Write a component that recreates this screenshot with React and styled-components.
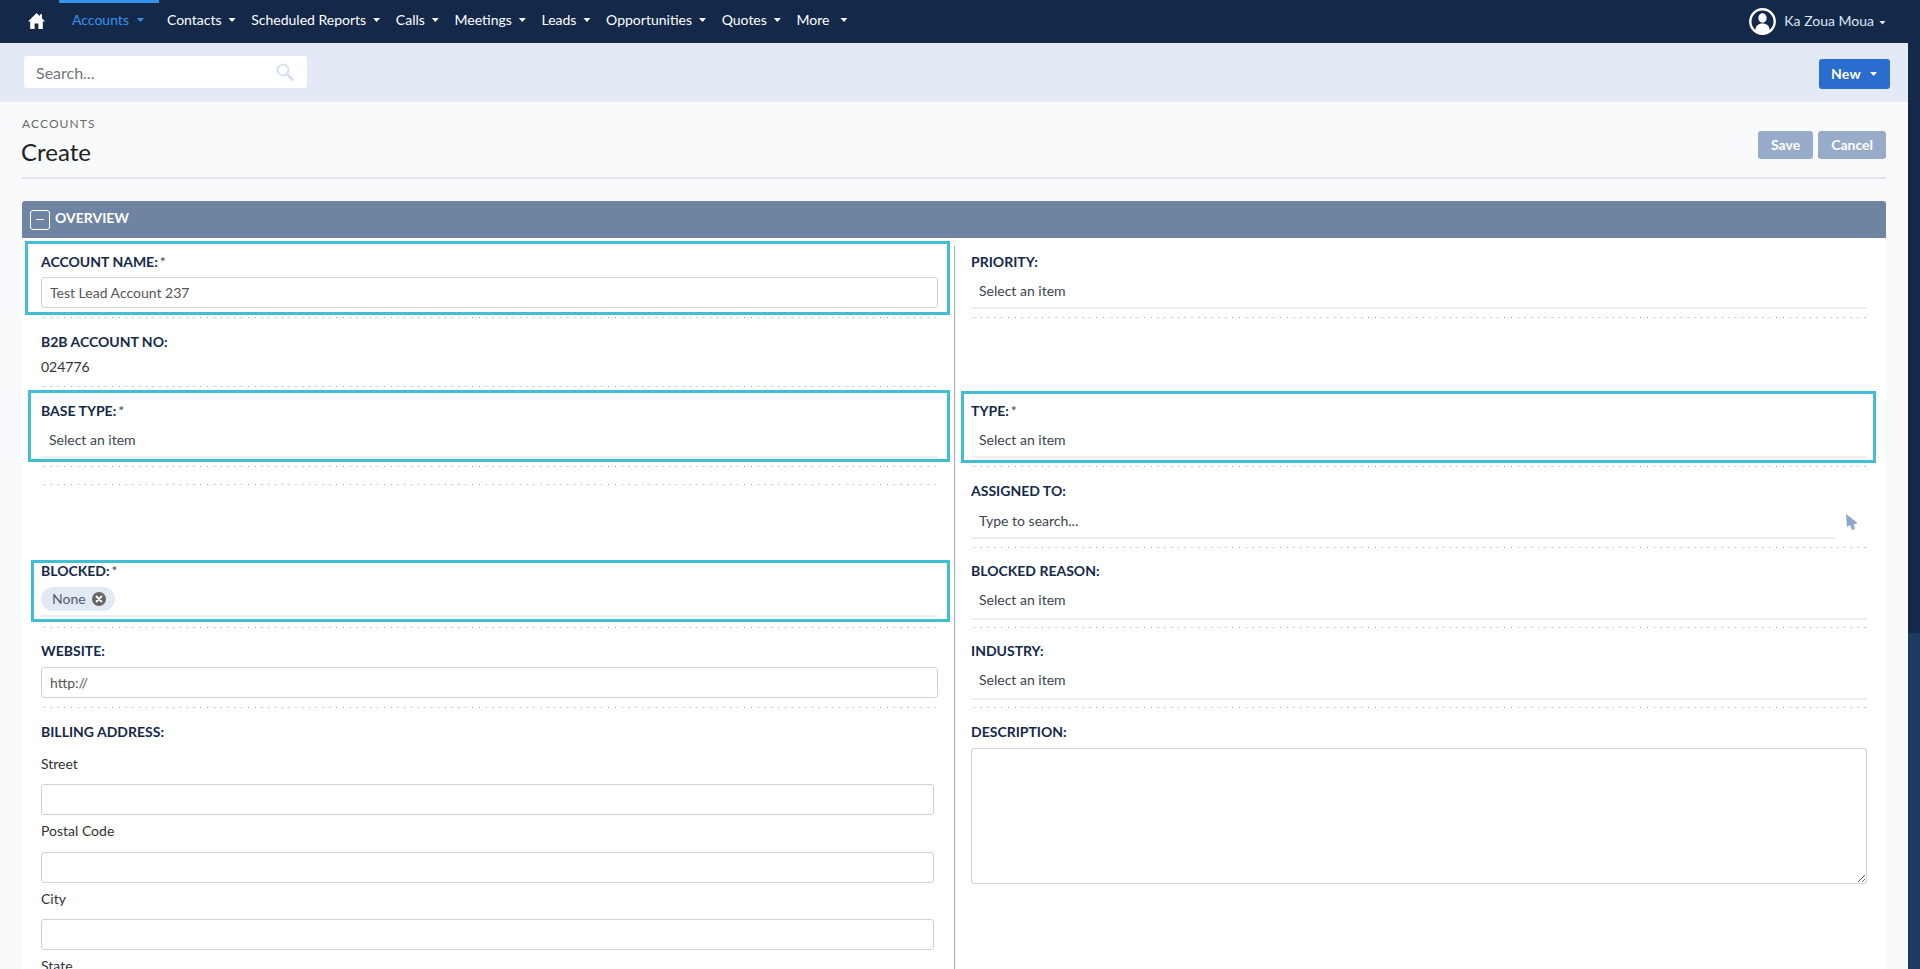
import React from "react";
import styled, { createGlobalStyle } from "styled-components";

const Navy = "#14294a";
const NavyTrack = "#1e3a5f";
const LabelColor = "#14294a";
const TextColor = "#3b4452";
const Teal = "#42bed4";

const GlobalStyle = createGlobalStyle`
  body {
    margin: 0;
    overflow: hidden;
    font-family: "Lato", "Liberation Sans", sans-serif;
    font-size: 14px;
    color: ${TextColor};
  }
  * {
    box-sizing: border-box;
  }
`;

const Shell = styled.div`
  height: 100vh;
  display: flex;
  overflow: hidden;
`;

const Page = styled.div`
  flex: 1;
  min-width: 0;
  display: flex;
  flex-direction: column;
  overflow: hidden;
  background: #f8fafc;
`;

const ScrollRail = styled.div`
  width: 12px;
  flex: none;
  background: ${NavyTrack};
`;

const ScrollThumb = styled.div`
  height: 633px;
  background: ${Navy};
`;

const NavBar = styled.nav`
  height: 43px;
  flex: none;
  display: flex;
  align-items: stretch;
  padding: 0 22px 0 28px;
  background: ${Navy};
`;

const HomeLink = styled.a`
  width: 31px;
  display: flex;
  align-items: center;
  padding-bottom: 2px;
  color: #fff;
`;

const NavList = styled.div`
  display: flex;
  align-items: stretch;
`;

const NavItem = styled.a`
  display: flex;
  align-items: center;
  padding: ${(p) => (p.$active ? "0 15px 5px 13px" : "0 15.7px 5px 0")};
  margin-right: ${(p) => (p.$active ? "8px" : "0")};
  border-top: 3px solid ${(p) => (p.$active ? "#3393ee" : "transparent")};
  border-bottom: 3px solid transparent;
  color: ${(p) => (p.$active ? "#3393ee" : "#fff")};
  white-space: nowrap;
`;

const Caret = styled.span`
  display: inline-block;
  width: 7px;
  height: 4px;
  margin: 2px 0 0 ${(p) => p.$gap || 7}px;
  background: currentColor;
  clip-path: polygon(0 0, 100% 0, 50% 100%);
`;

const UserMenu = styled.div`
  margin-left: auto;
  display: flex;
  align-items: center;
  color: #dbe8f6;
`;

const UserName = styled.span`
  margin: 0 0 2px 8px;
`;

const ActionBar = styled.div`
  height: 59px;
  flex: none;
  display: flex;
  justify-content: space-between;
  align-items: flex-start;
  padding: 13px 18px 0 24px;
  background: #e3e9f5;
`;

const SearchBox = styled.div`
  width: 283px;
  height: 32px;
  display: flex;
  align-items: center;
  justify-content: space-between;
  padding: 0 13px 0 12px;
  background: #fff;
  border-radius: 3px;
  color: #d6e0ee;
`;

const SearchInput = styled.input`
  width: 200px;
  border: 0;
  outline: 0;
  padding: 0;
  background: transparent;
  font: 16px "Lato", sans-serif;
  &::placeholder {
    color: #6f7680;
    opacity: 1;
  }
`;

const NewButton = styled.button`
  width: 71px;
  height: 30px;
  margin-top: 3px;
  display: flex;
  align-items: center;
  padding: 0 0 2px 12px;
  border: 0;
  border-radius: 3px;
  background: #2b6dcf;
  color: #fff;
  font: bold 14px "Lato", sans-serif;
  letter-spacing: 0.3px;
`;

const Heading = styled.header`
  height: 77px;
  flex: none;
  margin: 0 22px 22px;
  display: flex;
  justify-content: space-between;
  align-items: flex-start;
  border-bottom: 2px solid #e3e5e8;
`;

const Breadcrumb = styled.div`
  margin-top: 15px;
  font-size: 12px;
  line-height: 14px;
  letter-spacing: 1.1px;
  color: #6b6b6b;
`;

const Title = styled.h1`
  margin: 6px 0 0 -1px;
  font-size: 24px;
  line-height: 30px;
  font-weight: 400;
  color: #222;
`;

const HeadingActions = styled.div`
  display: flex;
  gap: 5px;
  margin-top: 29px;
`;

const GhostButton = styled.button`
  height: 28px;
  padding: 0 13px 2px;
  border: 0;
  border-radius: 3px;
  background: #98abcb;
  color: #fff;
  font: bold 14px "Lato", sans-serif;
`;

const Panel = styled.section`
  flex: 1;
  margin: 0 22px;
  display: flex;
  flex-direction: column;
  background: #fff;
`;

const PanelHeader = styled.div`
  height: 37px;
  flex: none;
  display: flex;
  align-items: center;
  gap: 5px;
  padding: 0 8px 5px;
  background: #6f84a2;
  border-radius: 3px 3px 0 0;
  color: #fff;
  font-weight: 700;
`;

const ToggleBox = styled.span`
  width: 20px;
  height: 20px;
  margin-top: 5px;
  display: flex;
  align-items: center;
  justify-content: center;
  border: 1px solid #fff;
  border-radius: 3px;
  &::before {
    content: "";
    width: 8px;
    height: 1px;
    background: #fff;
  }
`;

const FormGrid = styled.div`
  margin-top: 8px;
  display: grid;
  grid-template-columns: 1fr 1fr;
  grid-template-rows: 72px 69px 80px 81px 80px 80px auto;
`;

const Cell = styled.div`
  position: relative;
  padding: ${(p) => (p.$right ? "0 19px 0 16px" : "0 16px 0 19px")};
  border-left: ${(p) => (p.$right ? "1px solid #a3afcc" : "0")};
`;

const Field = styled.div`
  height: ${(p) => p.$height || "100%"};
  padding-top: ${(p) => p.$top ?? 14}px;
  background-image: ${(p) =>
    p.$plain
      ? "none"
      : "linear-gradient(to right, #999 1px, transparent 1px)"};
  background-size: 6.8px 1px;
  background-position: 3px bottom;
  background-repeat: repeat-x;
`;

const Label = styled.div`
  font-size: 14px;
  line-height: 20px;
  font-weight: 700;
  color: ${LabelColor};
  text-transform: uppercase;
`;

const Required = styled.span`
  margin-left: 2px;
  font-weight: 400;
  color: #3c4a60;
`;

const Value = styled.div`
  margin-top: 5px;
  line-height: 20px;
  color: #333;
`;

const TextInput = styled.input`
  display: block;
  width: ${(p) => (p.$narrow ? "calc(100% - 4px)" : "100%")};
  height: 31px;
  margin-top: ${(p) => p.$top ?? 5}px;
  padding: 0 8px 1px;
  background: #fff;
  border: 1px solid #cdd1d8;
  border-radius: 3px;
  outline: 0;
  color: #555;
  font: 14px "Lato", sans-serif;
`;

const SelectBox = styled.div`
  flex: 1;
  height: ${(p) => p.$height ?? 28}px;
  margin-top: ${(p) => p.$top ?? 9}px;
  padding-left: 8px;
  line-height: 20px;
  border-bottom: 2px solid #efefef;
  color: #3b4452;
`;

const SearchRow = styled.div`
  display: flex;
  align-items: flex-start;
`;

const LookupIcon = styled.svg`
  flex: none;
  margin: 13px 10px 0;
  color: #8fa6cc;
`;

const ChipRow = styled.div`
  height: 30px;
  margin-top: 6px;
  border-bottom: 2px solid #efefef;
`;

const Chip = styled.span`
  height: 24px;
  display: inline-flex;
  align-items: center;
  gap: 6px;
  padding: 0 9px 1px 11px;
  border-radius: 12px;
  background: #e3e9f5;
  color: #505c6e;
`;

const AddressLabel = styled.div`
  margin-top: ${(p) => p.$top ?? 6}px;
  line-height: 20px;
  color: #333;
`;

const Description = styled.textarea`
  display: block;
  width: 100%;
  height: 136px;
  margin-top: 6px;
  padding: 8px;
  border: 1px solid #cdd1d8;
  border-radius: 3px;
  outline: 0;
  resize: both;
  font: 14px "Lato", sans-serif;
`;

const Callout = styled.div`
  position: absolute;
  inset: ${(p) => p.$inset};
  border: 3px solid ${Teal};
  pointer-events: none;
`;

const HomeIcon = () => (
  <svg width="17" height="16" viewBox="0 0 17 16" fill="currentColor">
    <path d="M8.5 0 L11.8 3.2 V1.2 H14 V5.3 L17 8.4 H14.8 V16 H10.4 V10.5 H6.6 V16 H2.2 V8.4 H0 Z" />
  </svg>
);

const UserIcon = () => (
  <svg width="27" height="27" viewBox="0 0 27 27" fill="#fff">
    <circle cx="13.5" cy="13.5" r="12.2" fill="none" stroke="#fff" strokeWidth="2.4" />
    <ellipse cx="13.5" cy="10" rx="4.2" ry="4.7" />
    <path d="M6.3 23 C6.3 17.5 9.5 15.5 13.5 15.5 C17.5 15.5 20.7 17.5 20.7 23 C16.5 25.6 10.5 25.6 6.3 23 Z" />
  </svg>
);

const SearchIcon = () => (
  <svg width="18" height="18" viewBox="0 0 18 18" fill="none" stroke="currentColor">
    <circle cx="7" cy="7" r="5.5" strokeWidth="2" />
    <path d="M11 11 L16.5 16.5" strokeWidth="3" strokeLinecap="round" />
  </svg>
);

const ChipClose = () => (
  <svg width="14" height="14" viewBox="0 0 14 14">
    <circle cx="7" cy="7" r="7" fill="#666" />
    <path d="M4.5 4.5 L9.5 9.5 M9.5 4.5 L4.5 9.5" stroke="#fff" strokeWidth="1.8" strokeLinecap="round" />
  </svg>
);

const navLinks = [
  { name: "Contacts" },
  { name: "Scheduled Reports" },
  { name: "Calls" },
  { name: "Meetings" },
  { name: "Leads" },
  { name: "Opportunities" },
  { name: "Quotes" },
  { name: "More", gap: 11 }
];

const Select = ({ label, required, top = 14, boxHeight }) => (
  <Field $top={top}>
    <Label>
      {label}:{required && <Required>*</Required>}
    </Label>
    <SelectBox $height={boxHeight}>Select an item</SelectBox>
  </Field>
);

const App = () => {
  return (
    <Shell>
      <GlobalStyle />
      <Page>
        <NavBar>
          <HomeLink>
            <HomeIcon />
          </HomeLink>
          <NavList>
            <NavItem $active>
              Accounts
              <Caret $gap={8} />
            </NavItem>
            {navLinks.map((link) => (
              <NavItem key={link.name}>
                {link.name}
                <Caret $gap={link.gap} />
              </NavItem>
            ))}
          </NavList>
          <UserMenu>
            <UserIcon />
            <UserName>Ka Zoua Moua</UserName>
            <Caret $gap={5} />
          </UserMenu>
        </NavBar>

        <ActionBar>
          <SearchBox>
            <SearchInput placeholder="Search..." />
            <SearchIcon />
          </SearchBox>
          <NewButton>
            New
            <Caret $gap={9} />
          </NewButton>
        </ActionBar>

        <Heading>
          <div>
            <Breadcrumb>ACCOUNTS</Breadcrumb>
            <Title>Create</Title>
          </div>
          <HeadingActions>
            <GhostButton>Save</GhostButton>
            <GhostButton>Cancel</GhostButton>
          </HeadingActions>
        </Heading>

        <Panel>
          <PanelHeader>
            <ToggleBox />
            OVERVIEW
          </PanelHeader>
          <FormGrid>
            <Cell>
              <Callout $inset="-5px 4px 3px 3px" />
              <Field $top={6}>
                <Label>
                  Account Name:<Required>*</Required>
                </Label>
                <TextInput defaultValue="Test Lead Account 237" />
              </Field>
            </Cell>
            <Cell $right>
              <Select label="Priority" top={6} />
            </Cell>

            <Cell>
              <Field>
                <Label>B2B Account No:</Label>
                <Value>024776</Value>
              </Field>
            </Cell>
            <Cell $right />

            <Cell>
              <Callout $inset="3px 4px 5px 6px" />
              <Select label="Base Type" required />
            </Cell>
            <Cell $right>
              <Callout $inset="4px 10px 4px 6px" />
              <Select label="Type" required />
            </Cell>

            <Cell>
              <Field $height="18px" />
            </Cell>
            <Cell $right>
              <Field>
                <Label>Assigned To:</Label>
                <SearchRow>
                  <SelectBox $top={10}>Type to search...</SelectBox>
                  <LookupIcon width="11" height="16" viewBox="0 0 11 16" fill="currentColor">
                    <path d="M0 0 L11 8.5 L11 9.5 L7.5 10 L9 15 L6 16 L4 11 L1 13 Z" />
                  </LookupIcon>
                </SearchRow>
              </Field>
            </Cell>

            <Cell>
              <Callout $inset="12px 4px 6px 9px" />
              <Field $top={13}>
                <Label>
                  Blocked:<Required>*</Required>
                </Label>
                <ChipRow>
                  <Chip>
                    None
                    <ChipClose />
                  </Chip>
                </ChipRow>
              </Field>
            </Cell>
            <Cell $right>
              <Select label="Blocked Reason" top={13} boxHeight={30} />
            </Cell>

            <Cell>
              <Field $top={13}>
                <Label>Website:</Label>
                <TextInput $top={6} defaultValue="http://" />
              </Field>
            </Cell>
            <Cell $right>
              <Select label="Industry" top={13} boxHeight={30} />
            </Cell>

            <Cell>
              <Field $plain>
                <Label>Billing Address:</Label>
                <AddressLabel $top={12}>Street</AddressLabel>
                <TextInput $narrow $top={10} />
                <AddressLabel>Postal Code</AddressLabel>
                <TextInput $narrow $top={11} />
                <AddressLabel>City</AddressLabel>
                <TextInput $narrow $top={10} />
                <AddressLabel>State</AddressLabel>
                <TextInput $narrow $top={10} />
              </Field>
            </Cell>
            <Cell $right>
              <Field $plain>
                <Label>Description:</Label>
                <Description />
              </Field>
            </Cell>
          </FormGrid>
        </Panel>
      </Page>
      <ScrollRail>
        <ScrollThumb />
      </ScrollRail>
    </Shell>
  );
};

export default App;
